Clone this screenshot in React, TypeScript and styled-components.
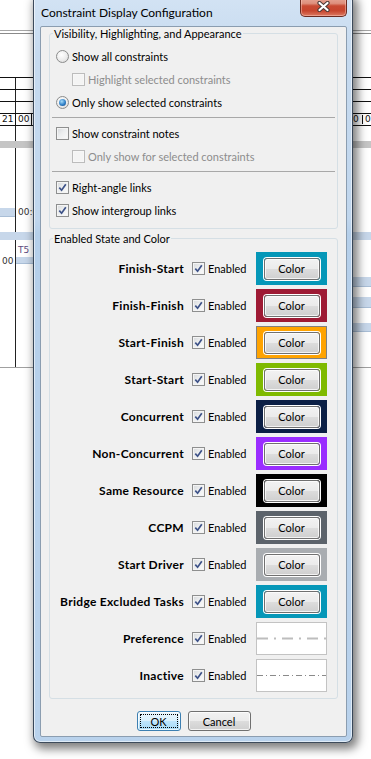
import React from 'react';
import styled, { createGlobalStyle } from 'styled-components';

const GlobalStyle = createGlobalStyle`
  html, body {
    margin: 0;
    padding: 0;
    background: #fff;
  }
  body {
    font-family: Lato, "Segoe UI", "Noto Sans", sans-serif;
    font-size: 11px;
    color: #000;
  }
  * {
    box-sizing: border-box;
  }
`;

const Screen = styled.div`
  position: relative;
  width: 371px;
  height: 759px;
  overflow: hidden;
  background: #fff;
`;

/* ---------- gantt chart behind the dialog ---------- */

const Backdrop = styled.div`
  display: flex;
  flex-direction: column;
  font-family: "DejaVu Sans", sans-serif;
  font-size: 9px;
  line-height: 9px;
`;

const Gap = styled.div<{ $h: number }>`
  height: ${(p) => p.$h}px;
  flex: none;
`;

const DoubleRule = styled.div`
  height: 4px;
  border-top: 1px solid #a6a6a6;
  border-bottom: 1px solid #8a8a8a;
`;

const ChartRow = styled.div<{ $h: number; $top?: boolean; $bottom?: string }>`
  display: flex;
  flex: none;
  height: ${(p) => p.$h}px;
  border-top: ${(p) => (p.$top ? '1px solid #111' : 'none')};
  border-bottom: ${(p) => (p.$bottom ? `1px solid ${p.$bottom}` : 'none')};
`;

const Band = styled.div<{ $h: number; $color: string }>`
  height: ${(p) => p.$h}px;
  flex: none;
  background: ${(p) => p.$color};
`;

const LeftCell = styled.div<{ $align?: string }>`
  width: 16px;
  flex: none;
  border-right: 1px solid #222;
  display: flex;
  align-items: ${(p) => p.$align || 'center'};
`;

const MainCell = styled.div<{ $justify?: string }>`
  flex: 1;
  display: flex;
  align-items: center;
  justify-content: ${(p) => p.$justify || 'flex-start'};
`;

const HourCell = styled.div<{ $w: number; $line?: boolean }>`
  width: ${(p) => p.$w}px;
  flex: none;
  padding-left: 2px;
  border-right: ${(p) => (p.$line ? '1px solid #111' : 'none')};
  display: flex;
  align-items: center;
  overflow: hidden;
  color: #111;
`;

const TimeLabel = styled.span<{ $color?: string }>`
  color: ${(p) => p.$color || '#333'};
  padding-left: 2px;
  white-space: nowrap;
`;

const TaskBar = styled.div<{ $w: string; $h: number }>`
  width: ${(p) => p.$w};
  height: ${(p) => p.$h}px;
  background: #c7d7ea;
  border-bottom: 1px solid #a9bed6;
  flex: none;
`;

const TaskStack = styled.div`
  display: flex;
  flex-direction: column;
  padding-top: 6px;
  gap: 2px;
`;

/* ---------- dialog window ---------- */

const Window = styled.div`
  position: absolute;
  left: 33px;
  top: -6px;
  width: 320px;
  display: flex;
  flex-direction: column;
  padding: 0 5px 5px 6px;
  border: 1px solid rgba(24, 36, 52, 0.8);
  border-radius: 7px;
  background: linear-gradient(180deg, #d3e3f4 0%, #c6daef 8%, #c0d6ed 30%, #b5cfea 32%, #b9d2ec 100%);
  box-shadow: inset 0 0 0 1px rgba(255, 255, 255, 0.55), 3px 4px 10px 2px rgba(0, 0, 0, 0.5);
`;

const TitleBar = styled.div`
  height: 31px;
  display: flex;
  align-items: flex-start;
`;

const TitleText = styled.span`
  padding: 10px 0 0 1px;
  line-height: 15px;
  font-size: 12px;
  color: #000;
`;

const CloseButton = styled.div`
  margin-left: auto;
  width: 47px;
  height: 22px;
  border: 1px solid #6b2a20;
  border-top: none;
  border-radius: 0 0 5px 5px;
  background: linear-gradient(180deg, #eab3a5 0%, #de8f7c 40%, #c84a33 52%, #c7452e 75%, #dc7a62 100%);
  box-shadow: inset 0 0 0 1px rgba(255, 210, 200, 0.45);
  display: flex;
  align-items: center;
  justify-content: center;
  padding-top: 2px;
`;

const Client = styled.div`
  display: flex;
  flex-direction: column;
  background: #f0f0f0;
  border: 1px solid #8b9db0;
  border-radius: 2px;
  padding: 0 8px 5px 8px;
`;

const Group = styled.fieldset<{ $gapTop: number; $padTop: number }>`
  margin: ${(p) => p.$gapTop}px 0 0;
  padding: ${(p) => p.$padTop}px 0 6px;
  border: 1px solid #d5dfe5;
  border-radius: 3px;
  min-width: 0;
  display: flex;
  flex-direction: column;
`;

const Legend = styled.legend`
  margin-left: 3px;
  padding: 0 1px;
  line-height: 13px;
  font-size: 11px;
`;

const OptionRow = styled.label<{ $indent: number }>`
  height: 23px;
  display: flex;
  align-items: center;
  padding-left: ${(p) => p.$indent}px;
  gap: 3px;
`;

const OptionText = styled.span<{ $disabled?: boolean }>`
  color: ${(p) => (p.$disabled ? '#8d8d8d' : '#000')};
  white-space: nowrap;
`;

const Separator = styled.div`
  height: 1px;
  margin: 3px 2px 4px;
  background: #a8a8a8;
`;

const RadioDot = styled.span<{ $on?: boolean }>`
  width: 13px;
  height: 13px;
  flex: none;
  border-radius: 50%;
  border: 1px solid #8b8c8c;
  background: radial-gradient(circle at 40% 35%, #ffffff 0%, #ececec 55%, #d2d2d2 100%);
  display: flex;
  align-items: center;
  justify-content: center;

  &::after {
    content: '';
    display: ${(p) => (p.$on ? 'block' : 'none')};
    width: 7px;
    height: 7px;
    border-radius: 50%;
    background: radial-gradient(circle at 40% 35%, #a6dcfa 0%, #2f80c8 55%, #123f78 100%);
  }
`;

const CheckBox = styled.span<{ $disabled?: boolean }>`
  width: 13px;
  height: 13px;
  flex: none;
  border: 1px solid ${(p) => (p.$disabled ? '#bcbcbc' : '#8e8f8f')};
  background: ${(p) =>
    p.$disabled ? '#f4f4f4' : 'linear-gradient(135deg, #d6d8db 0%, #eceeef 45%, #fbfbfb 100%)'};
  box-shadow: inset 0 0 0 1px ${(p) => (p.$disabled ? '#f7f7f7' : '#f4f4f4')};
  display: flex;
  align-items: center;
  justify-content: center;
`;

const StateRow = styled.div`
  height: 33px;
  display: flex;
  align-items: center;
  padding-right: 10px;
`;

const StateName = styled.span`
  width: 134px;
  flex: none;
  text-align: right;
  font-size: 12px;
  font-weight: 700;
  letter-spacing: 0.3px;
  white-space: nowrap;
`;

const EnabledBox = styled.label`
  display: flex;
  align-items: center;
  gap: 3px;
  margin-left: 8px;
`;

const Swatch = styled.div<{ $fill: string; $edge: string }>`
  margin-left: auto;
  width: 71px;
  height: 33px;
  flex: none;
  background: ${(p) => p.$fill};
  border: 1px solid ${(p) => p.$edge};
  display: flex;
  align-items: center;
  justify-content: center;
`;

const PushButton = styled.button<{ $w: number; $h: number; $default?: boolean }>`
  width: ${(p) => p.$w}px;
  height: ${(p) => p.$h}px;
  padding: 0;
  font: inherit;
  font-size: 11px;
  color: #000;
  border-radius: 3px;
  border: 1px solid ${(p) => (p.$default ? '#3c7fb1' : '#707070')};
  background: ${(p) =>
    p.$default
      ? 'linear-gradient(180deg, #eaf6fd 0%, #d9f0fc 49%, #bee6fd 50%, #a7d9f5 100%)'
      : 'linear-gradient(180deg, #f2f2f2 0%, #ebebeb 49%, #dddddd 50%, #cfcfcf 100%)'};
  box-shadow: inset 0 0 0 1px rgba(255, 255, 255, 0.75);
  outline: ${(p) => (p.$default ? '1px dotted #000' : 'none')};
  outline-offset: -4px;
`;

const ColorButton = styled(PushButton)`
  box-shadow: inset 0 0 0 1px rgba(255, 255, 255, 0.75), 0 0 0 1px #fff;
`;

const ButtonBar = styled.div`
  margin-top: 12px;
  display: flex;
  justify-content: center;
  gap: 7px;
`;

/* ---------- data ---------- */

type StateItem = { label: string; fill?: string; edge?: string; line?: 'preference' | 'inactive' };

const states: StateItem[] = [
  { label: 'Finish-Start', fill: '#0597b8' },
  { label: 'Finish-Finish', fill: '#9e1a34' },
  { label: 'Start-Finish', fill: '#ffa300', edge: '#808080' },
  { label: 'Start-Start', fill: '#7fba00' },
  { label: 'Concurrent', fill: '#0b1f45' },
  { label: 'Non-Concurrent', fill: '#9a2dff' },
  { label: 'Same Resource', fill: '#000000' },
  { label: 'CCPM', fill: '#5c636b' },
  { label: 'Start Driver', fill: '#a9adb1' },
  { label: 'Bridge Excluded Tasks', fill: '#0597b8' },
  { label: 'Preference', line: 'preference' },
  { label: 'Inactive', line: 'inactive' },
];

const Tick = () => (
  <svg width="9" height="9" viewBox="0 0 9 9">
    <path d="M1.3 4.6 L3.6 7.2 L7.8 1.2" fill="none" stroke="#3d5288" strokeWidth="1.7" />
  </svg>
);

const CloseGlyph = () => (
  <svg width="13" height="11" viewBox="0 0 13 11">
    <path d="M2.5 2 L10.5 9 M10.5 2 L2.5 9" stroke="#4a3a36" strokeWidth="4.2" strokeLinecap="round" />
    <path d="M2.5 2 L10.5 9 M10.5 2 L2.5 9" stroke="#ffffff" strokeWidth="2.2" strokeLinecap="round" />
  </svg>
);

const LineSample = ({ kind }: { kind: 'preference' | 'inactive' }) =>
  kind === 'preference' ? (
    <svg width="69" height="31" viewBox="0 0 69 31">
      <line x1="0" y1="15.5" x2="69" y2="15.5" stroke="#bdbdbd" strokeWidth="2" strokeDasharray="11 6 2 6" />
    </svg>
  ) : (
    <svg width="69" height="31" viewBox="0 0 69 31">
      <line x1="0" y1="15.5" x2="69" y2="15.5" stroke="#8a8a8a" strokeWidth="1" strokeDasharray="6 3 1 3" />
    </svg>
  );

const Option = ({
  kind,
  text,
  indent,
  on,
  disabled,
}: {
  kind: 'radio' | 'check';
  text: string;
  indent: number;
  on?: boolean;
  disabled?: boolean;
}) => (
  <OptionRow $indent={indent}>
    {kind === 'radio' ? (
      <RadioDot $on={on} />
    ) : (
      <CheckBox $disabled={disabled}>{on && <Tick />}</CheckBox>
    )}
    <OptionText $disabled={disabled}>{text}</OptionText>
  </OptionRow>
);

const GanttBackdrop = () => (
  <Backdrop>
    <Gap $h={30} />
    <DoubleRule />
    <Gap $h={43} />
    <ChartRow $h={12} $top>
      <LeftCell />
      <MainCell />
    </ChartRow>
    <ChartRow $h={12} $top>
      <LeftCell />
      <MainCell />
    </ChartRow>
    <ChartRow $h={12} $top>
      <LeftCell />
      <MainCell />
    </ChartRow>
    <ChartRow $h={13} $top $bottom="#111">
      <HourCell $w={16} $line>21</HourCell>
      <HourCell $w={16} $line>00</HourCell>
      <MainCell $justify="flex-end">
        <HourCell $w={12} $line>0</HourCell>
        <HourCell $w={8}>0</HourCell>
      </MainCell>
    </ChartRow>
    <ChartRow $h={15}>
      <LeftCell />
      <MainCell />
    </ChartRow>
    <Band $h={7} $color="#c5c5c5" />
    <ChartRow $h={60}>
      <LeftCell />
      <MainCell />
    </ChartRow>
    <ChartRow $h={9}>
      <LeftCell>
        <TaskBar $w="15px" $h={9} />
      </LeftCell>
      <MainCell>
        <TimeLabel>00:00</TimeLabel>
      </MainCell>
    </ChartRow>
    <ChartRow $h={15}>
      <LeftCell />
      <MainCell />
    </ChartRow>
    <Band $h={8} $color="#c7d7ea" />
    <ChartRow $h={26}>
      <LeftCell $align="flex-end">
        <TimeLabel>00</TimeLabel>
      </LeftCell>
      <TaskStack>
        <TimeLabel $color="#5c4a7e">T5</TimeLabel>
        <TaskBar $w="120px" $h={7} />
      </TaskStack>
    </ChartRow>
    <ChartRow $h={11}>
      <LeftCell />
      <MainCell />
    </ChartRow>
    <ChartRow $h={10}>
      <LeftCell />
      <MainCell $justify="flex-end">
        <TaskBar $w="60px" $h={10} />
      </MainCell>
    </ChartRow>
    <ChartRow $h={10}>
      <LeftCell />
      <MainCell />
    </ChartRow>
    <ChartRow $h={11}>
      <LeftCell />
      <MainCell $justify="flex-end">
        <TaskBar $w="60px" $h={11} />
      </MainCell>
    </ChartRow>
    <ChartRow $h={15}>
      <LeftCell />
      <MainCell />
    </ChartRow>
    <ChartRow $h={9}>
      <LeftCell />
      <MainCell $justify="flex-end">
        <TaskBar $w="60px" $h={9} />
      </MainCell>
    </ChartRow>
    <ChartRow $h={36} $bottom="#a0a0a0">
      <LeftCell />
      <MainCell />
    </ChartRow>
  </Backdrop>
);

const App: React.FC = () => {
  return (
    <Screen>
      <GlobalStyle />
      <GanttBackdrop />
      <Window>
        <TitleBar>
          <TitleText>Constraint Display Configuration</TitleText>
          <CloseButton>
            <CloseGlyph />
          </CloseButton>
        </TitleBar>
        <Client>
          <Group $gapTop={0} $padTop={5}>
            <Legend>Visibility, Highlighting, and Appearance</Legend>
            <Option kind="radio" text="Show all constraints" indent={6} />
            <Option kind="check" text="Highlight selected constraints" indent={22} disabled />
            <Option kind="radio" text="Only show selected constraints" indent={6} on />
            <Separator />
            <Option kind="check" text="Show constraint notes" indent={6} />
            <Option kind="check" text="Only show for selected constraints" indent={22} disabled />
            <Separator />
            <Option kind="check" text="Right-angle links" indent={6} on />
            <Option kind="check" text="Show intergroup links" indent={6} on />
          </Group>
          <Group $gapTop={3} $padTop={7}>
            <Legend>Enabled State and Color</Legend>
            {states.map((s, i) => (
              <React.Fragment key={s.label}>
                {i > 0 && <Gap $h={4} />}
                <StateRow>
                  <StateName>{s.label}</StateName>
                  <EnabledBox>
                    <CheckBox>
                      <Tick />
                    </CheckBox>
                    <span>Enabled</span>
                  </EnabledBox>
                  {s.line ? (
                    <Swatch $fill="#fff" $edge="#c3c3c3">
                      <LineSample kind={s.line} />
                    </Swatch>
                  ) : (
                    <Swatch $fill={s.fill!} $edge={s.edge || s.fill!}>
                      <ColorButton $w={56} $h={22}>Color</ColorButton>
                    </Swatch>
                  )}
                </StateRow>
              </React.Fragment>
            ))}
          </Group>
          <ButtonBar>
            <PushButton $w={44} $h={20} $default>
              OK
            </PushButton>
            <PushButton $w={63} $h={20}>
              Cancel
            </PushButton>
          </ButtonBar>
        </Client>
      </Window>
    </Screen>
  );
};

export default App;
